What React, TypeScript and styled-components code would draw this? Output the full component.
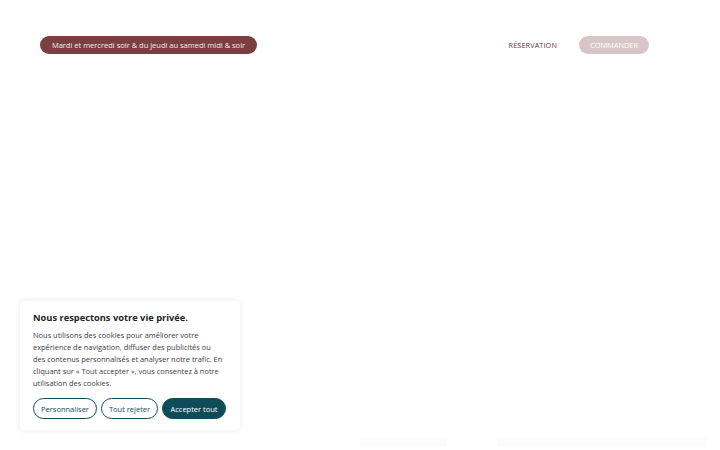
import React from "react";
import styled, { createGlobalStyle } from "styled-components";

const Global = createGlobalStyle`
  html, body { margin: 0; padding: 0; background: #ffffff; }
  body { font-family: "Open Sans", "Liberation Sans", sans-serif; }
  * { box-sizing: border-box; }
`;

const Page = styled.div`
  position: relative;
  width: 720px;
  height: 450px;
  overflow: hidden;
  background: #ffffff;
  display: flex;
  flex-direction: column;
`;

const Header = styled.header`
  display: flex;
  align-items: center;
  justify-content: space-between;
  padding: 36px 71px 0 40px;
  height: 54px;
`;

const HoursPill = styled.div`
  height: 18px;
  width: 217px;
  border-radius: 9px;
  background: #7b3f42;
  color: #f6eded;
  font-size: 7.5px;
  font-weight: 500;
  display: flex;
  align-items: center;
  justify-content: center;
  white-space: nowrap;
`;

const Nav = styled.nav`
  display: flex;
  align-items: center;
  gap: 22px;
`;

const NavLink = styled.a`
  color: #5e3a3d;
  font-size: 7.3px;
  font-weight: 500;
  letter-spacing: 0.1px;
  text-decoration: none;
`;

const OrderButton = styled.a`
  height: 18px;
  width: 70px;
  border-radius: 9px;
  background: #d8c5c8;
  color: #ffffff;
  font-size: 7.4px;
  font-weight: 500;
  display: flex;
  align-items: center;
  justify-content: center;
  text-decoration: none;
`;

const Main = styled.main`
  flex: 1;
`;

const Footer = styled.div`
  display: flex;
  gap: 50px;
  padding: 0 14px 3px 360px;
`;

const FaintBar = styled.div<{ $w: number }>`
  width: ${(p) => p.$w}px;
  height: 10px;
  background: #fcfcfc;
`;

const CookieCard = styled.section`
  position: absolute;
  left: 20px;
  top: 301px;
  width: 220px;
  height: 129px;
  background: #ffffff;
  border-radius: 4px;
  box-shadow: 0 0 6px rgba(0, 0, 0, 0.09);
  padding: 11px 13px 0 13px;
  color: #2b2b2b;
`;

const CookieTitle = styled.h2`
  margin: 0 0 5px 0;
  font-size: 9.3px;
  font-weight: 700;
  color: #1f1f1f;
  line-height: 12px;
`;

const CookieText = styled.p`
  margin: 0;
  font-size: 7.45px;
  line-height: 12px;
  color: #3d3d3d;
  white-space: nowrap;
`;

const Actions = styled.div`
  display: flex;
  gap: 4px;
  margin-top: 9px;
`;

const CookieButton = styled.button<{ $primary?: boolean; $w: number }>`
  height: 21px;
  width: ${(p) => p.$w}px;
  border-radius: 11px;
  border: 1.4px solid #0e4c5a;
  background: ${(p) => (p.$primary ? "#0e4c5a" : "#ffffff")};
  color: ${(p) => (p.$primary ? "#ffffff" : "#0e4c5a")};
  font-family: inherit;
  font-size: 7.5px;
  font-weight: 500;
  padding: 0;
  cursor: pointer;
`;

export default function App() {
  return (
    <Page>
      <Global />
      <Header>
        <HoursPill>Mardi et mercredi soir &amp; du jeudi au samedi midi &amp; soir</HoursPill>
        <Nav>
          <NavLink href="#">RÉSERVATION</NavLink>
          <OrderButton href="#">COMMANDER</OrderButton>
        </Nav>
      </Header>
      <Main />
      <Footer>
        <FaintBar $w={87} />
        <FaintBar $w={210} />
      </Footer>
      <CookieCard>
        <CookieTitle>Nous respectons votre vie privée.</CookieTitle>
        <CookieText>
          Nous utilisons des cookies pour améliorer votre
          <br />
          expérience de navigation, diffuser des publicités ou
          <br />
          des contenus personnalisés et analyser notre trafic. En
          <br />
          cliquant sur « Tout accepter », vous consentez à notre
          <br />
          utilisation des cookies.
        </CookieText>
        <Actions>
          <CookieButton $w={64}>Personnaliser</CookieButton>
          <CookieButton $w={57}>Tout rejeter</CookieButton>
          <CookieButton $w={64} $primary>
            Accepter tout
          </CookieButton>
        </Actions>
      </CookieCard>
    </Page>
  );
}
